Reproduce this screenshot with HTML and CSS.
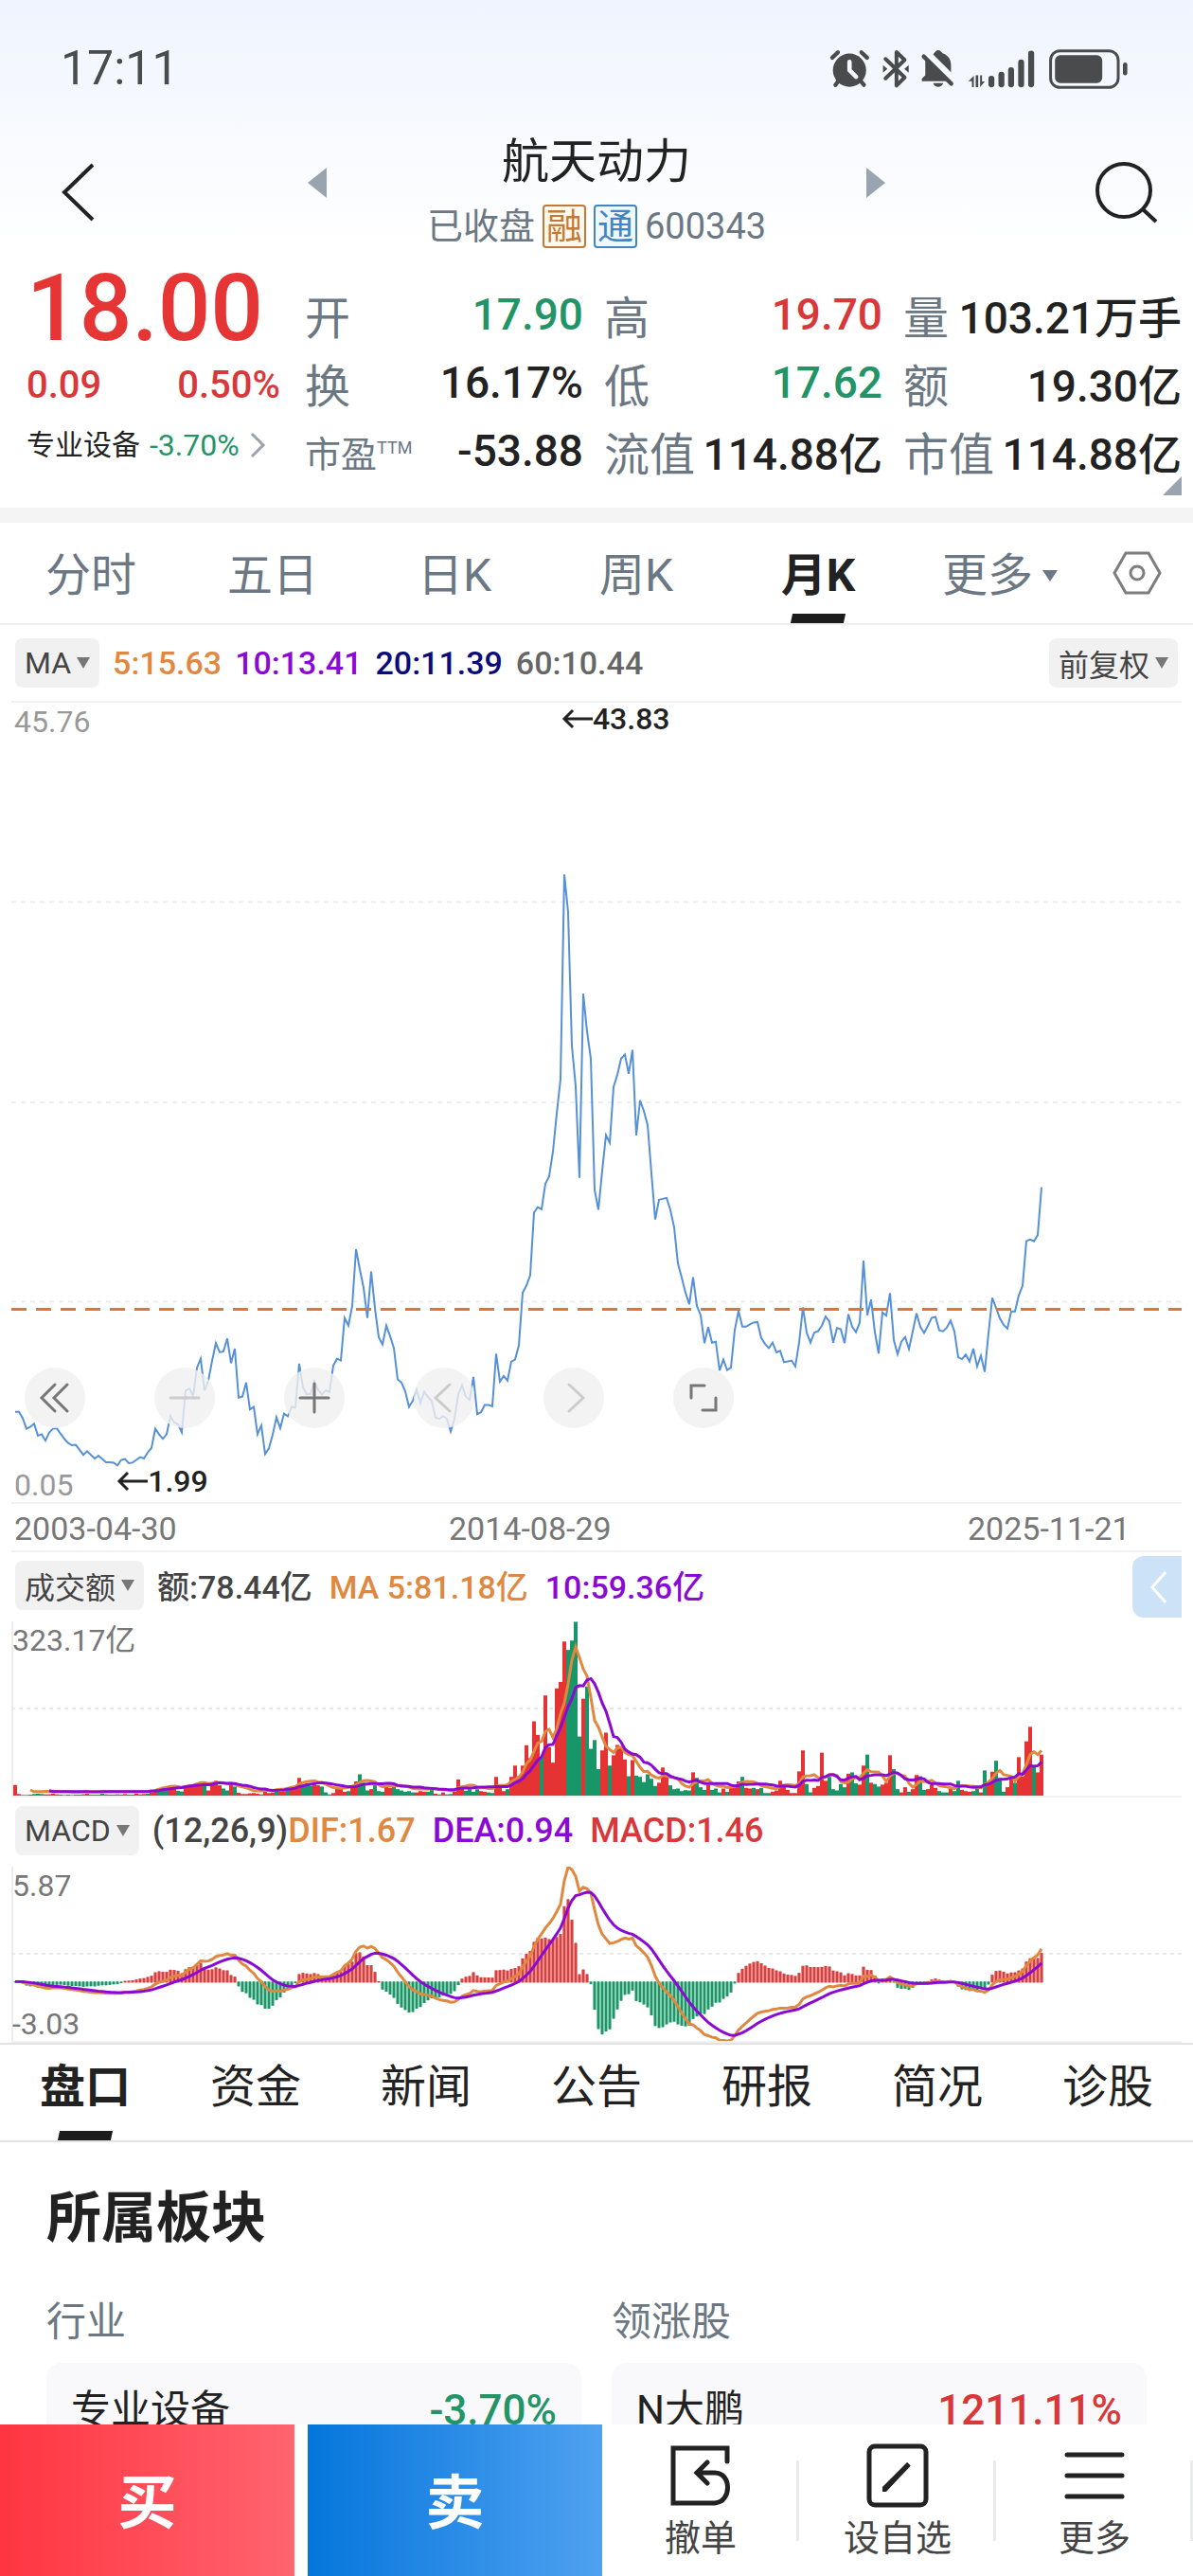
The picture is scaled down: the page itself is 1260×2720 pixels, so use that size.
FILE: index.html
```
<!DOCTYPE html>
<html lang="zh-CN">
  <head>
    <meta charset="UTF-8" />
    <meta name="viewport" content="width=device-width, initial-scale=1.0" />
    <title>航天动力 600343</title>
    <link rel="stylesheet" href="styles.css">
  </head>
  <body>
    <div class="app">
      <header class="top">
        <div class="status">
          <span class="clock">17:11</span>
          <svg class="status-icons" viewBox="45 60 955 130" fill="none" stroke="#4a4b4d" stroke-linecap="round" stroke-linejoin="round">
            <circle cx="109" cy="130" r="53" fill="#4a4b4d" stroke="none" />
            <path d="M54 90L72 73M147 73L165 90M74 164L64 177M144 164L155 177" stroke-width="13" />
            <path d="M109 103V130L130 151" stroke="#f4f8fe" stroke-width="14" />
            <path d="M224 94L285 153L259 179V72L285 97L224 156" stroke-width="12" />
            <path d="M216 114L230 126L216 138ZM298 114L284 126L298 138Z" fill="#4a4b4d" stroke="none" />
            <path d="M340 165V157L351 146V103C351 96 354 92 356 90L428 165ZM376 80C382 72 386 66 392 66S404 72 406 76C424 82 433 96 433 114V136ZM376 171H408C404 187 380 187 376 171Z" fill="#4a4b4d" stroke="none" />
            <path d="M346 86L434 173" stroke-width="13" />
            <path d="M506 184V148L489 165H500V184ZM512 146H520V184H512ZM526 146V184L541 166H532V146Z" fill="#4a4b4d" stroke="none" />
            <path d="M562 157V175M594 144V175M625 130V175M657 105V175M689 77V175" stroke-width="19" />
            <rect x="751" y="68" width="216" height="117" rx="30" stroke-width="9" />
            <rect x="765" y="82" width="151" height="89" rx="17" fill="#4a4b4d" stroke="none" />
            <path d="M989 112V139" stroke-width="14" />
          </svg>
        </div>

        <div class="nav">
          <button class="icon-btn back" aria-label="返回">
            <svg width="40" height="64" viewBox="0 0 40 64"><path d="M34 3L4 32L34 61" fill="none" stroke="#222" stroke-width="4" /></svg>
          </button>
          <div class="stock-switch">
            <button class="switch" aria-label="上一只">
              <svg width="20" height="32" viewBox="0 0 20 32"><path d="M20 0V32L0 16Z" fill="#9aa4b0" /></svg>
            </button>
            <div class="stock">
              <h1>航天动力</h1>
              <p>已收盘 <span class="badge margin">融</span><span class="badge connect">通</span>600343</p>
            </div>
            <button class="switch" aria-label="下一只">
              <svg width="20" height="32" viewBox="0 0 20 32"><path d="M0 0V32L20 16Z" fill="#9aa4b0" /></svg>
            </button>
          </div>
          <button class="icon-btn" aria-label="搜索">
            <svg width="68" height="66" viewBox="0 0 68 66" fill="none" stroke="#222" stroke-width="4"><circle cx="31" cy="31" r="28" /><path d="M51 51L65 64" /></svg>
          </button>
        </div>

        <section class="quote">
          <div class="price">
            <strong>18.00</strong>
            <div class="change"><span>0.09</span><span>0.50%</span></div>
            <a class="sector" href="#sector">专业设备 <span class="green">-3.70%</span>
              <svg width="18" height="28" viewBox="0 0 18 28"><path d="M3 2L15 14L3 26" fill="none" stroke="#9aa4b0" stroke-width="3" /></svg>
            </a>
          </div>
          <dl class="stats">
            <div><dt>开</dt><dd class="green">17.90</dd></div>
            <div><dt>高</dt><dd class="red">19.70</dd></div>
            <div><dt>量</dt><dd>103.21万手</dd></div>
            <div><dt>换</dt><dd>16.17%</dd></div>
            <div><dt>低</dt><dd class="green">17.62</dd></div>
            <div><dt>额</dt><dd>19.30亿</dd></div>
            <div><dt class="small">市盈<sup>TTM</sup></dt><dd>-53.88</dd></div>
            <div><dt>流值</dt><dd>114.88亿</dd></div>
            <div><dt>市值</dt><dd>114.88亿</dd></div>
          </dl>
          <svg class="corner" width="20" height="20" viewBox="0 0 20 20"><path d="M20 0V20H0Z" fill="#9aa4b0" /></svg>
        </section>
      </header>

      <nav class="periods">
        <button>分时</button>
        <button>五日</button>
        <button>日K</button>
        <button>周K</button>
        <button class="active">月K</button>
        <button>更多<i class="caret"></i></button>
        <button class="gear" aria-label="设置">
          <svg width="52" height="46" viewBox="0 0 52 46" fill="none" stroke="#7d7d7d" stroke-width="3"><path d="M14 2H38L50 23L38 44H14L2 23Z" /><circle cx="26" cy="23" r="7" /></svg>
        </button>
      </nav>

      <main class="charts">
        <div class="legend ma">
          <button class="pill">MA<i class="caret"></i></button>
          <span class="orange">5:15.63</span>
          <span class="purple">10:13.41</span>
          <span class="navy">20:11.39</span>
          <span class="grey">60:10.44</span>
          <button class="pill right">前复权<i class="caret"></i></button>
        </div>
        <div class="plot kline">
          <svg id="kline" viewBox="0 0 1236 846" preserveAspectRatio="none"></svg>
          <span class="scale top-left">45.76</span>
          <span class="scale bottom-left">0.05</span>
          <span class="mark high"><svg width="33" height="22" viewBox="0 0 33 22"><path d="M33 11H3M12 2L3 11L12 20" fill="none" stroke="#222" stroke-width="3" /></svg>43.83</span>
          <span class="mark low"><svg width="33" height="22" viewBox="0 0 33 22"><path d="M33 11H3M12 2L3 11L12 20" fill="none" stroke="#222" stroke-width="3" /></svg>1.99</span>
          <div class="tools">
            <button aria-label="最左"><svg viewBox="0 0 64 64"><path d="M32 18L18 32L32 46M45 18L31 32L45 46" /></svg></button>
            <button aria-label="缩小" disabled><svg viewBox="0 0 64 64"><path d="M17 32H47" /></svg></button>
            <button aria-label="放大"><svg viewBox="0 0 64 64"><path d="M17 32H47M32 17V47" /></svg></button>
            <button aria-label="左移" disabled><svg viewBox="0 0 64 64"><path d="M38 18L23 32L38 46" /></svg></button>
            <button aria-label="右移" disabled><svg viewBox="0 0 64 64"><path d="M27 18L42 32L27 46" /></svg></button>
            <button aria-label="全屏"><svg viewBox="0 0 64 64"><path d="M19 32V19H33M45 32V45H31" /></svg></button>
          </div>
        </div>
        <div class="dates"><span>2003-04-30</span><span>2014-08-29</span><span>2025-11-21</span></div>

        <div class="legend">
          <button class="pill">成交额<i class="caret"></i></button>
          <span>额:78.44亿</span>
          <span class="orange">MA 5:81.18亿</span>
          <span class="purple">10:59.36亿</span>
          <button class="drawer" aria-label="展开">
            <svg width="20" height="36" viewBox="0 0 20 36"><path d="M17 2L3 18L17 34" fill="none" stroke="#fff" stroke-width="3" /></svg>
          </button>
        </div>
        <div class="plot sub">
          <svg id="volume" viewBox="0 0 1236 186" preserveAspectRatio="none"></svg>
          <span class="scale dark top-left">323.17亿</span>
        </div>

        <div class="legend macd">
          <button class="pill">MACD<i class="caret"></i></button>
          <span>(12,26,9)<b class="orange">DIF:1.67</b></span>
          <span class="purple">DEA:0.94</span>
          <span class="red">MACD:1.46</span>
        </div>
        <div class="plot sub">
          <svg id="macd" viewBox="0 0 1236 186" preserveAspectRatio="none"></svg>
          <span class="scale dark top-left">5.87</span>
          <span class="scale dark bottom-left">-3.03</span>
        </div>
      </main>

      <nav class="sections">
        <button class="active">盘口</button>
        <button>资金</button>
        <button>新闻</button>
        <button>公告</button>
        <button>研报</button>
        <button>简况</button>
        <button>诊股</button>
      </nav>

      <section class="sector-info" id="sector">
        <h2>所属板块</h2>
        <div class="cards">
          <div>
            <h3>行业</h3>
            <a class="card" href="#sector">专业设备 <span class="green">-3.70%</span></a>
          </div>
          <div>
            <h3>领涨股</h3>
            <a class="card" href="#sector">N大鹏 <span class="red">1211.11%</span></a>
          </div>
        </div>
      </section>

      <footer class="actions">
        <button class="buy">买</button>
        <button class="sell">卖</button>
        <button class="tool">
          <svg width="66" height="68" viewBox="0 0 66 68" fill="none" stroke="#222" stroke-width="5" stroke-linecap="round"><path d="M61 19V5H4V63H48C66 62 66 31 48 31H29M40 20L29 31L40 42" /></svg>
          撤单
        </button>
        <button class="tool">
          <svg width="66" height="68" viewBox="0 0 66 68" fill="none" stroke="#222" stroke-width="5"><rect x="3" y="3" width="60" height="62" rx="6" /><path d="M17 51V46L43 20L46 23L21 51Z" fill="#222" stroke="none" /><path d="M20 48L45 22" /></svg>
          设自选
        </button>
        <button class="tool">
          <svg width="66" height="68" viewBox="0 0 66 68" fill="none" stroke="#222" stroke-width="5" stroke-linecap="round"><path d="M4 12H62M4 34H62M4 56H62" /></svg>
          更多
        </button>
      </footer>
    </div>
    <script src="charts.js"></script>
  </body>
</html>
```

FILE: styles.css
```
* {
  box-sizing: border-box;
  margin: 0;
  padding: 0;
}

body {
  font-family: Roboto, "Noto Sans CJK SC", sans-serif;
  color: #222;
  background: #fff;
}

button {
  font: inherit;
  color: inherit;
  border: none;
  background: none;
  cursor: pointer;
}

a {
  color: inherit;
  text-decoration: none;
}

svg {
  display: block;
}

.app {
  display: flex;
  flex-direction: column;
  height: 100vh;
  overflow: hidden;
}

.app > * {
  flex-shrink: 0;
}

.red {
  color: #d8383a;
}
.green {
  color: #229467;
}
.orange {
  color: #e0883f;
}
.purple {
  color: #8a0ad4;
}
.navy {
  color: #0b0b78;
}
.grey {
  color: #666;
}

.caret {
  display: inline-block;
  border: 7px solid transparent;
  border-top: 12px solid #777;
  border-bottom: none;
}

/* header */
.top {
  background: linear-gradient(#eff4fe, #fff 260px);
  border-bottom: 16px solid #f4f4f4;
}

.status {
  display: flex;
  align-items: center;
  justify-content: space-between;
  height: 144px;
  padding: 0 67px 0 64px;
}
.clock {
  font-size: 50px;
  color: #4a4b4d;
}
.status-icons {
  width: 318px;
  height: 43px;
}

.nav {
  display: flex;
  align-items: center;
  justify-content: space-between;
  height: 136px;
  padding: 0 36px 18px;
}
.icon-btn {
  width: 68px;
}
.back {
  padding-left: 28px;
}
.stock-switch {
  display: flex;
  align-items: center;
}
.switch {
  padding-bottom: 20px;
}
.stock {
  width: 570px;
  text-align: center;
}
.stock h1 {
  font-size: 50px;
  line-height: 64px;
  font-weight: 400;
}
.stock p {
  display: flex;
  align-items: center;
  justify-content: center;
  gap: 8px;
  margin-top: 8px;
  font-size: 38px;
  line-height: 56px;
  color: #6b7883;
}
.badge {
  height: 46px;
  padding: 0 2px;
  border: 2px solid;
  border-radius: 4px;
  line-height: 42px;
}
.margin {
  color: #c27a35;
  background: #fff8ee;
}
.connect {
  color: #4285c0;
  background: #eff8ff;
}

.quote {
  position: relative;
  display: grid;
  grid-template-columns: 268px 1fr;
  gap: 26px;
  height: 256px;
  padding: 0 12px 0 28px;
}
.price strong {
  display: block;
  font-size: 98px;
  line-height: 92px;
  font-weight: 500;
  color: #e53535;
}
.change {
  display: flex;
  justify-content: space-between;
  font-size: 40px;
  line-height: 70px;
  font-weight: 500;
  color: #d8383a;
}
.sector {
  display: flex;
  align-items: center;
  gap: 10px;
  font-size: 30px;
  line-height: 56px;
}
.sector span {
  font-size: 32px;
}
.stats {
  display: grid;
  grid-template-columns: repeat(3, 1fr);
  grid-auto-rows: 72px;
  column-gap: 22px;
  padding-top: 16px;
}
.stats div {
  display: flex;
  align-items: center;
  justify-content: space-between;
  white-space: nowrap;
}
.stats dt {
  font-size: 48px;
  color: #6b7883;
}
.stats dt.small {
  font-size: 38px;
}
.stats sup {
  font-size: 18px;
}
.stats dd {
  font-size: 46px;
  font-weight: 500;
}
.corner {
  position: absolute;
  right: 12px;
  bottom: 13px;
}

/* period tabs */
.periods {
  display: flex;
  height: 108px;
  padding-right: 10px;
  border-bottom: 2px solid #eee;
}
.periods button,
.sections button {
  position: relative;
  flex: 1;
  padding-bottom: 4px;
  font-size: 48px;
}
.periods button {
  color: #6b7883;
}
.periods .gear {
  display: flex;
  align-items: center;
  justify-content: center;
  flex: 0 0 98px;
  padding-bottom: 0;
}
.periods .caret {
  margin-left: 10px;
  vertical-align: 10px;
  border-width: 12px 8px 0;
  border-top-color: #6b7883;
}
.periods .active,
.sections .active {
  color: #222;
  font-weight: 700;
}
.active::after {
  content: "";
  position: absolute;
  left: 50%;
  bottom: 0;
  width: 56px;
  height: 10px;
  margin-left: -28px;
  background: #1c1c1c;
  transform: skewX(-12deg);
}

/* charts */
.charts {
  padding: 0 12px;
}
.legend {
  position: relative;
  display: flex;
  align-items: center;
  gap: 14px;
  height: 73px;
  padding: 0 4px 4px;
  font-size: 34px;
  font-weight: 500;
  color: #444;
}
.legend span + span {
  margin-left: 4px;
}
.legend.ma {
  height: 82px;
  padding-bottom: 0;
  border-bottom: 2px solid #f1f1f1;
}
.legend.ma span + span {
  margin-left: 0;
}
.legend.macd {
  font-size: 36px;
}
.legend b {
  font-weight: 500;
}
.pill {
  display: flex;
  align-items: center;
  gap: 6px;
  height: 52px;
  padding: 0 10px;
  border-radius: 8px;
  background: #f1f1f1;
  font-size: 32px;
  font-weight: 400;
}
.right {
  margin-left: auto;
}
.drawer {
  position: absolute;
  right: 0;
  top: 4px;
  height: 65px;
  width: 52px;
  padding-left: 18px;
  border-radius: 12px 0 0 12px;
  background: #cce2f7;
}
.plot {
  position: relative;
  border-bottom: 2px solid #f1f1f1;
}
.plot > svg {
  width: 100%;
}
.kline > svg {
  height: 844px;
}
.sub {
  box-shadow: inset 2px 0 #eee;
}
.sub > svg {
  height: 184px;
}
.scale {
  position: absolute;
  left: 3px;
  font-size: 32px;
  line-height: 40px;
  color: #999;
}
.dark {
  left: 1px;
  color: #777;
}
.top-left {
  top: 0;
}
.bottom-left {
  bottom: -2px;
}
.mark {
  position: absolute;
  display: flex;
  align-items: center;
  font-size: 32px;
  line-height: 40px;
  font-weight: 500;
}
.high {
  left: 47%;
  top: -3px;
}
.low {
  left: 9%;
  bottom: 2px;
}
.tools {
  position: absolute;
  left: 14px;
  bottom: 78px;
  display: flex;
  gap: 73px;
}
.tools button {
  width: 64px;
  height: 64px;
  border-radius: 50%;
  background: rgba(240, 240, 240, 0.8);
}
.tools svg {
  fill: none;
  stroke: #777;
  stroke-width: 3;
  stroke-linecap: round;
}
.tools button:disabled svg {
  stroke: #ccc;
}
.dates {
  display: grid;
  grid-template-columns: 459fr 548fr 226fr;
  height: 51px;
  padding-left: 3px;
  border-bottom: 2px solid #f1f1f1;
  font-size: 34px;
  line-height: 52px;
  color: #777;
}

/* info tabs */
.sections {
  display: flex;
  height: 105px;
  border-top: 2px solid #e2e2e2;
  border-bottom: 2px solid #e2e2e2;
}
.sections button {
  padding-bottom: 22px;
}

.app > .sector-info {
  flex: 1 1 0;
  min-height: 0;
  padding: 44px 49px 0;
  overflow: hidden;
}
.sector-info h2 {
  font-size: 58px;
  line-height: 72px;
}
.sector-info h3 {
  font-size: 42px;
  line-height: 60px;
  font-weight: 400;
  color: #6b7883;
}
.cards {
  display: grid;
  grid-template-columns: 1fr 1fr;
  gap: 32px;
  margin-top: 44px;
}
.card {
  display: flex;
  justify-content: space-between;
  margin-top: 13px;
  padding: 20px 26px;
  border-radius: 16px;
  background: #f9f9fc;
  font-size: 42px;
  line-height: 60px;
}
.card span {
  font-size: 44px;
  font-weight: 500;
}

/* bottom bar */
.actions {
  display: flex;
  height: 160px;
  background: #fff;
}
.buy,
.sell {
  flex: 311;
  padding-bottom: 4px;
  font-size: 62px;
  font-weight: 700;
  color: #fff;
}
.buy {
  margin-right: 14px;
  background: linear-gradient(90deg, #ff3541, #ff646f);
}
.sell {
  background: linear-gradient(90deg, #0576dc, #4fa1f0);
}
.tool {
  position: relative;
  display: flex;
  flex: 208;
  flex-direction: column;
  align-items: center;
  gap: 6px;
  padding-top: 20px;
  font-size: 38px;
  line-height: 52px;
  color: #444;
}
.tool::after {
  content: "";
  position: absolute;
  right: 0;
  top: 38px;
  width: 3px;
  height: 85px;
  background: #eaebec;
}
```

FILE: charts.js
```
const RED = "#e53232";
const GREEN = "#199667";
const ORANGE = "#e0883f";
const PURPLE = "#8a0ad4";
const STEP = 4; // px per month
const START = 4;

// monthly closes, as depth below the top of the price scale
const levels = [
  1261, 1261, 1275, 1298, 1294, 1287, 1313, 1310, 1324, 1306,
  1298, 1297, 1309, 1320, 1329, 1334, 1333, 1344, 1355, 1347,
  1355, 1363, 1357, 1364, 1371, 1371, 1372, 1378, 1366, 1364,
  1373, 1372, 1366, 1360, 1363, 1350, 1340, 1298, 1310, 1320,
  1310, 1270, 1285, 1288, 1306, 1215, 1210, 1226, 1165, 1145,
  1215, 1193, 1150, 1111, 1131, 1129, 1101, 1155, 1123, 1230,
  1228, 1197, 1256, 1250, 1310, 1291, 1353, 1341, 1311, 1273,
  1297, 1265, 1271, 1250, 1252, 1156, 1208, 1223, 1222, 1194,
  1213, 1223, 1214, 1218, 1160, 1145, 1149, 1056, 1073, 1030,
  906, 950, 990, 1056, 955, 1035, 1098, 1114, 1073, 1096,
  1122, 1190, 1197, 1216, 1250, 1237, 1213, 1242, 1217, 1228,
  1238, 1274, 1276, 1271, 1276, 1304, 1276, 1223, 1203, 1228,
  1235, 1185, 1266, 1262, 1246, 1246, 1249, 1134, 1195, 1183,
  1193, 1151, 1147, 1116, 1001, 985, 963, 826, 814, 819,
  763, 747, 693, 610, 535, 88, 170, 462, 550, 750,
  348, 430, 490, 776, 820, 735, 657, 674, 552, 525,
  490, 481, 523, 471, 658, 581, 604, 635, 740, 841,
  798, 796, 794, 820, 858, 937, 968, 1001, 1026, 967,
  1030, 1050, 1111, 1076, 1110, 1108, 1171, 1147, 1170, 1164,
  1083, 1041, 1075, 1075, 1070, 1066, 1065, 1100, 1113, 1122,
  1110, 1131, 1128, 1153, 1151, 1149, 1162, 1110, 1033, 1088,
  1110, 1088, 1085, 1073, 1053, 1064, 1110, 1078, 1081, 1111,
  1048, 1075, 1087, 1066, 931, 1050, 1016, 1087, 1134, 1044,
  1051, 1002, 1104, 1135, 1108, 1098, 1124, 1086, 1046, 1075,
  1089, 1073, 1056, 1054, 1083, 1085, 1077, 1062, 1085, 1142,
  1146, 1136, 1151, 1123, 1162, 1138, 1174, 1090, 1012, 1034,
  1057, 1071, 1079, 1042, 1042, 1007, 986, 888, 885, 889,
  875, 771
];
const closes = levels.map((v) => 45.76 - ((v + 287) / 1745) * 45.71);

// monthly turnover, negative for a falling month
const turnover = [
  33, 5, 2, 2, 3, -5, -6, -5, 4, 4,
  6, 4, 3, 2, 3, 2, 3, -3, 4, 6,
  3, 3, 3, -6, 4, 3, 3, 4, 3, 5,
  3, 3, 6, 4, 5, -6, 10, 14, -22, -24,
  -18, 22, 20, -15, -13, 32, 30, 28, 38, 34,
  -30, 16, 34, 46, 32, -22, -16, 33, -28, 9,
  5, 5, 7, 8, 6, -4, 12, 8, 10, -14,
  12, 14, -24, 22, 26, 55, -34, -38, -30, 34,
  32, -28, -10, -4, 8, 26, 24, 12, -14, 28,
  44, -66, -40, -16, 20, -32, -14, -12, 30, 24,
  -28, -20, -16, -12, -14, -10, 10, 14, 12, -12,
  -20, 6, -4, 10, -4, -5, 12, 50, 24, -15,
  -20, -12, -20, 14, 12, -10, -8, 58, 28, 14,
  -20, 58, 93, 60, 93, 156, 116, 230, 188, -120,
  310, 150, 102, 332, 352, 477, -451, -480, -538, -183,
  300, -338, -145, -172, -82, 140, 195, -93, 125, 157,
  150, 112, -60, 110, -62, -58, -42, -66, -52, -30,
  40, 87, 58, -32, -20, -22, -14, -17, -16, 72,
  -55, -26, -18, 34, -18, -22, -10, 22, -12, 24,
  28, 44, -58, 24, 22, -24, 20, -24, -8, -8,
  12, 16, 46, 36, 18, 8, 8, 75, 140, -36,
  -10, 24, 30, 133, 46, -58, -20, -16, -36, -26,
  68, -72, -38, 34, 93, -127, 40, -36, -28, 34,
  40, 125, -82, -20, 10, 26, -12, 20, 64, -60,
  -18, 20, 34, 24, -14, -10, -10, 22, -14, -46,
  18, 14, 12, -14, -26, 10, -78, 38, 74, -108,
  -54, -12, 26, 56, -40, 119, 60, 168, 213, -88,
  72, 127
];

function draw(svg, tag, attrs) {
  const el = document.createElementNS("http://www.w3.org/2000/svg", tag);
  for (const key in attrs) el.setAttribute(key, attrs[key]);
  svg.appendChild(el);
}

function drawLine(svg, ys, color, width, from = 0) {
  const points = ys
    .map((y, i) => `${START + i * STEP},${y.toFixed(1)}`)
    .slice(from)
    .join(" ");
  draw(svg, "polyline", { points, fill: "none", stroke: color, "stroke-width": width });
}

function drawGrid(svg, y, color, width, dash) {
  draw(svg, "line", { x1: 0, x2: 1236, y1: y, y2: y, stroke: color, "stroke-width": width, "stroke-dasharray": dash });
}

function average(values, n) {
  return values.map((_, i) => {
    const part = values.slice(Math.max(0, i - n + 1), i + 1);
    return part.reduce((a, b) => a + b, 0) / part.length;
  });
}

function ema(values, n) {
  const out = [values[0]];
  for (let i = 1; i < values.length; i++) {
    out.push((values[i] * 2 + out[i - 1] * (n - 1)) / (n + 1));
  }
  return out;
}

// price
const kline = document.getElementById("kline");
[211, 423, 634].forEach((y) => drawGrid(kline, y, "#eee", 2, "5 5"));
drawLine(kline, closes.map((c) => ((45.76 - c) / 45.71) * 846), "#5690d6", 2);
drawGrid(kline, 642, "#dc7637", 3, "16 10");

// turnover
const volume = document.getElementById("volume");
drawGrid(volume, 93, "#e8e8e8", 2, "4 4");
turnover.forEach((v, i) => {
  const h = Math.abs(v) / 2.9;
  draw(volume, "rect", { x: START - 2 + i * STEP, y: 186 - h, width: STEP, height: h, fill: v > 0 ? RED : GREEN });
});
const amounts = turnover.map((v) => Math.abs(v));
drawLine(volume, average(amounts, 5).map((v) => 183 - v / 2.95), ORANGE, 3, 4);
drawLine(volume, average(amounts, 10).map((v) => 183 - v / 2.95), PURPLE, 3, 9);

// MACD(12,26,9)
const macd = document.getElementById("macd");
const toY = (v) => ((5.87 - v) / 8.9) * 186;
const slow = ema(closes, 26);
const dif = ema(closes, 12).map((v, i) => v - slow[i]);
const dea = ema(dif, 9);
drawGrid(macd, 93, "#e8e8e8", 2, "4 4");
dif.forEach((v, i) => {
  const bar = (v - dea[i]) * 2;
  const y = Math.min(toY(bar), toY(0));
  const height = Math.abs(toY(bar) - toY(0)) + 1;
  const x = START + i * STEP;
  draw(macd, "rect", { x: x - 2, y, width: 4, height, fill: bar > 0 ? "#f28a8a" : "#7fd0b0" });
  draw(macd, "rect", { x: x - 1, y, width: 2, height, fill: bar > 0 ? "#cc4444" : "#258f66" });
});
drawLine(macd, dif.map(toY), ORANGE, 3);
drawLine(macd, dea.map(toY), PURPLE, 3);
```
